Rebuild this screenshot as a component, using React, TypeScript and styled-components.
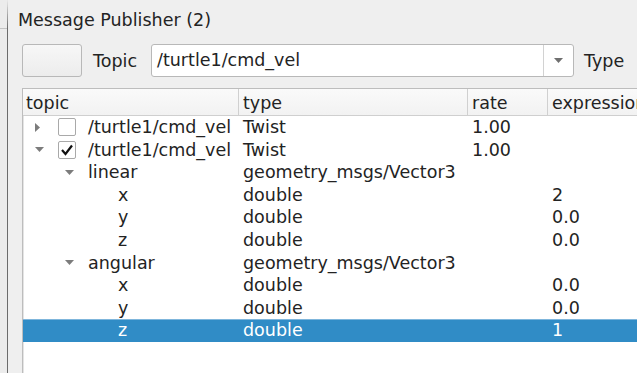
import React from 'react'
import styled, { createGlobalStyle } from 'styled-components'

const GlobalStyle = createGlobalStyle`
  html, body {
    margin: 0;
    padding: 0;
    background: #efefef;
    overflow: hidden;
  }
  body {
    font-family: 'DejaVu Sans', 'Liberation Sans', sans-serif;
    font-size: 17.5px;
    color: #232323;
  }
`

const Window = styled.div`
  display: flex;
  width: 637px;
  height: 373px;
  overflow: hidden;
`

const SideStrip = styled.div`
  width: 7px;
  flex: none;
  background: #ececec;
  border-right: 1px solid #6c6c6c;
  border-top: 28px solid #ececec;
  box-shadow: inset 0 1px 0 #c4c4c4;
`

const Panel = styled.div`
  flex: 1;
  min-width: 0;
  display: flex;
  flex-direction: column;
  padding: 10px 0 0 10px;
`

const Title = styled.div`
  line-height: 20px;
  height: 20px;
  white-space: nowrap;
`

const Body = styled.div`
  display: flex;
  flex-direction: column;
  padding: 14px 0 0 4px;
  gap: 11px;
  flex: 1;
  min-height: 0;
`

const Toolbar = styled.div`
  display: flex;
  align-items: center;
  height: 33px;
  white-space: nowrap;
`

const PushButton = styled.div`
  width: 60px;
  height: 33px;
  box-sizing: border-box;
  border: 1px solid #b8b8b8;
  border-radius: 3px;
  background: linear-gradient(#f7f7f7, #ececec);
  flex: none;
`

const Label = styled.span<{ $left: number }>`
  margin-left: ${p => p.$left}px;
  flex: none;
`

const Combo = styled.div`
  margin-left: 14px;
  width: 423px;
  height: 33px;
  box-sizing: border-box;
  display: flex;
  border: 1px solid #b8b8b8;
  border-radius: 3px;
  background: #fff;
  flex: none;
`

const ComboText = styled.div`
  flex: 1;
  padding-left: 5px;
  line-height: 31px;
`

const ComboButton = styled.div`
  width: 29px;
  border-left: 1px solid #d2d2d2;
  display: flex;
  align-items: center;
  justify-content: center;
`

const Tree = styled.div`
  flex: 1;
  background: #fff;
  border-left: 1px solid #bdbdbd;
  border-top: 1px solid #bdbdbd;
  box-shadow: inset 1px 0 0 #e4e4e4;
  overflow: hidden;
`

const columns = '215px 229px 80px 140px'

const HeaderRow = styled.div`
  display: grid;
  grid-template-columns: ${columns};
  height: 27px;
  box-sizing: border-box;
  background: linear-gradient(#fafafa, #f2f2f2);
  border-bottom: 1px solid #cfcfcf;
`

const HeaderCell = styled.div<{ $pad: number }>`
  padding-left: ${p => p.$pad}px;
  line-height: 26px;
  padding-top: 1px;
  border-left: 1px solid #d0d0d0;
  white-space: nowrap;
  overflow: hidden;
  &:first-child {
    border-left: none;
  }
`

const Row = styled.div<{ $selected?: boolean }>`
  display: grid;
  grid-template-columns: ${columns};
  height: 22.6px;
  line-height: 22.6px;
  white-space: nowrap;
  background: ${p => (p.$selected ? '#308cc6' : 'transparent')};
  color: ${p => (p.$selected ? '#ffffff' : 'inherit')};
  box-shadow: ${p => (p.$selected ? 'inset 0 1px 0 #7fb6dc' : 'none')};
`

const TreeCell = styled.div<{ $level: number }>`
  display: flex;
  align-items: center;
  padding-left: ${p => 5 + p.$level * 30}px;
  overflow: hidden;
`

const Branch = styled.div`
  width: 30px;
  flex: none;
  display: flex;
  align-items: center;
  padding-left: 7px;
  box-sizing: border-box;
`

const Cell = styled.div`
  padding-left: 5px;
  overflow: hidden;
`

const Check = styled.div`
  width: 18px;
  height: 18px;
  box-sizing: border-box;
  border: 1px solid #a9a9a9;
  border-radius: 2px;
  background: #fff;
  margin-right: 12px;
  flex: none;
  display: flex;
  align-items: center;
  justify-content: center;
`

const DownArrow = () => (
  <svg width='9' height='5' viewBox='0 0 9 5'>
    <polygon points='0,0 9,0 4.5,5' fill='#7c7c7c' />
  </svg>
)

const RightArrow = () => (
  <svg width='5' height='9' viewBox='0 0 5 9'>
    <polygon points='0,0 5,4.5 0,9' fill='#7c7c7c' />
  </svg>
)

type Node = {
  name: string
  type: string
  rate?: string
  expr?: string
  level: number
  expander?: 'open' | 'closed'
  check?: boolean
  selected?: boolean
}

const rows: Node[] = [
  { name: '/turtle1/cmd_vel', type: 'Twist', rate: '1.00', level: 0, expander: 'closed', check: false },
  { name: '/turtle1/cmd_vel', type: 'Twist', rate: '1.00', level: 0, expander: 'open', check: true },
  { name: 'linear', type: 'geometry_msgs/Vector3', level: 1, expander: 'open' },
  { name: 'x', type: 'double', expr: '2', level: 2 },
  { name: 'y', type: 'double', expr: '0.0', level: 2 },
  { name: 'z', type: 'double', expr: '0.0', level: 2 },
  { name: 'angular', type: 'geometry_msgs/Vector3', level: 1, expander: 'open' },
  { name: 'x', type: 'double', expr: '0.0', level: 2 },
  { name: 'y', type: 'double', expr: '0.0', level: 2 },
  { name: 'z', type: 'double', expr: '1', level: 2, selected: true }
]

export default function App () {
  return (
    <Window>
      <GlobalStyle />
      <SideStrip />
      <Panel>
        <Title>Message Publisher (2)</Title>
        <Body>
          <Toolbar>
            <PushButton />
            <Label $left={11}>Topic</Label>
            <Combo>
              <ComboText>/turtle1/cmd_vel</ComboText>
              <ComboButton>
                <svg width='9' height='5' viewBox='0 0 9 5'>
                  <polygon points='0,0 9,0 4.5,5' fill='#6f6f6f' />
                </svg>
              </ComboButton>
            </Combo>
            <Label $left={10}>Type</Label>
          </Toolbar>
          <Tree>
            <HeaderRow>
              <HeaderCell $pad={3}>topic</HeaderCell>
              <HeaderCell $pad={4}>type</HeaderCell>
              <HeaderCell $pad={4}>rate</HeaderCell>
              <HeaderCell $pad={4}>expression</HeaderCell>
            </HeaderRow>
            {rows.map((r, i) => (
              <Row key={i} $selected={r.selected}>
                <TreeCell $level={r.level}>
                  <Branch>
                    {r.expander === 'open' && <DownArrow />}
                    {r.expander === 'closed' && <RightArrow />}
                  </Branch>
                  {r.check !== undefined && (
                    <Check>
                      {r.check && (
                        <svg width='14' height='14' viewBox='0 0 14 14'>
                          <polyline points='2,7 5.5,11 12,2.5' fill='none' stroke='#111' strokeWidth='2.2' />
                        </svg>
                      )}
                    </Check>
                  )}
                  <span>{r.name}</span>
                </TreeCell>
                <Cell>{r.type}</Cell>
                <Cell>{r.rate}</Cell>
                <Cell>{r.expr}</Cell>
              </Row>
            ))}
          </Tree>
        </Body>
      </Panel>
    </Window>
  )
}
